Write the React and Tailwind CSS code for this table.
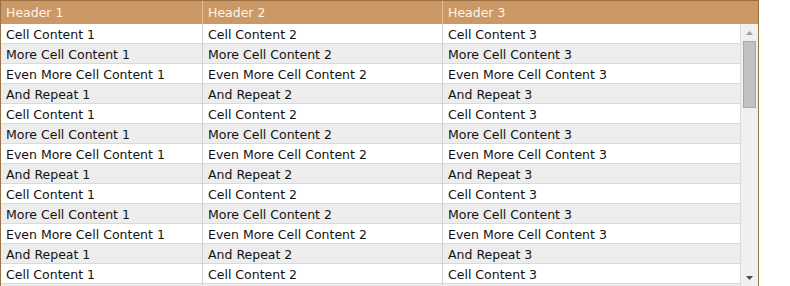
import React from 'react'

const rowTexts = ['Cell Content', 'More Cell Content', 'Even More Cell Content', 'And Repeat']

const rows = Array.from({ length: 13 }).map((_, i) => rowTexts[i % 4])

const ScrollTrack = () => (
    <div className="w-[18px] shrink-0 bg-[#f0f0f0] border-l border-[#dcdcdc] flex flex-col items-center">
        <div className="h-[17px] w-full flex items-center justify-center">
            <svg width="7" height="4" viewBox="0 0 7 4"><path d="M3.5 0 L7 4 L0 4 Z" fill="#a3a3a3" /></svg>
        </div>
        <div className="w-[13px] h-[67px] bg-[#c2c2c2] border border-[#a9a9a9]" />
        <div className="flex-1" />
        <div className="h-[17px] w-full flex items-center justify-center">
            <svg width="7" height="4" viewBox="0 0 7 4"><path d="M0 0 L7 0 L3.5 4 Z" fill="#4a4a4a" /></svg>
        </div>
    </div>
)

export default function App() {
    return (
        <div className="w-[790px] h-[286px] bg-white overflow-hidden" style={{ fontFamily: '"DejaVu Sans", Verdana, sans-serif' }}>
            <div className="w-[759px] border border-[#9b7246] border-b-0">
                <div className="grid grid-cols-[202px_240px_1fr] h-[23px] bg-[#cc9966] text-[#fbf3ea] text-[12.5px]">
                    <div className="px-[5px] pt-[2px] flex items-center border-r border-[#e2bf98]">Header 1</div>
                    <div className="px-[5px] pt-[2px] flex items-center border-r border-[#e2bf98]">Header 2</div>
                    <div className="px-[5px] pt-[2px] flex items-center">Header 3</div>
                </div>
                <div className="flex h-[262px] overflow-hidden">
                    <div className="flex-1 text-[12.5px] text-[#111]">
                        {rows.map((text, i) => (
                            <div
                                key={i}
                                className={`grid grid-cols-[202px_240px_1fr] h-[20px] border-b border-[#d9d9d9] ${i % 2 ? 'bg-[#ededed]' : 'bg-white'}`}
                            >
                                <div className="px-[5px] pt-[2px] flex items-center border-r border-[#cfcfcf]">{text} 1</div>
                                <div className="px-[5px] pt-[2px] flex items-center border-r border-[#cfcfcf]">{text} 2</div>
                                <div className="px-[5px] pt-[2px] flex items-center">{text} 3</div>
                            </div>
                        ))}
                        <div className="h-[2px] bg-[#ededed]" />
                    </div>
                    <ScrollTrack />
                </div>
            </div>
        </div>
    )
}
